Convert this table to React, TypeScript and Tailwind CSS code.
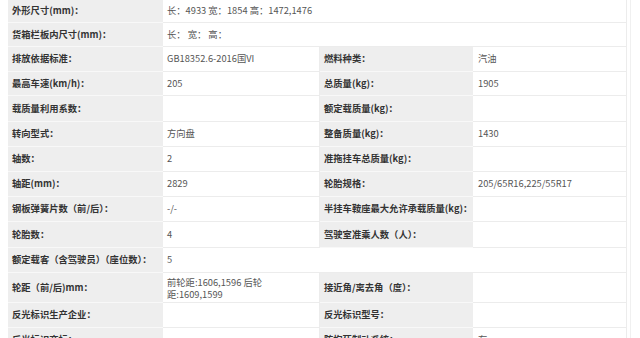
type Row = {
  h: string;
  l1: string;
  v1: React.ReactNode;
  l2?: string;
  v2?: string;
};

const rows: Row[] = [
  { h: 'h-[23px]', l1: '外形尺寸(mm)：', v1: '长：4933 宽：1854 高：1472,1476' },
  { h: 'h-[24px]', l1: '货箱栏板内尺寸(mm)：', v1: '长： 宽： 高：' },
  { h: 'h-[25px]', l1: '排放依据标准：', v1: 'GB18352.6-2016国VI', l2: '燃料种类：', v2: '汽油' },
  { h: 'h-[24px]', l1: '最高车速(km/h)：', v1: '205', l2: '总质量(kg)：', v2: '1905' },
  { h: 'h-[26px]', l1: '载质量利用系数：', v1: '', l2: '额定载质量(kg)：', v2: '' },
  { h: 'h-[25px]', l1: '转向型式：', v1: '方向盘', l2: '整备质量(kg)：', v2: '1430' },
  { h: 'h-[25px]', l1: '轴数：', v1: '2', l2: '准拖挂车总质量(kg)：', v2: '' },
  { h: 'h-[25px]', l1: '轴距(mm)：', v1: '2829', l2: '轮胎规格：', v2: '205/65R16,225/55R17' },
  { h: 'h-[25px]', l1: '钢板弹簧片数（前/后）：', v1: '-/-', l2: '半挂车鞍座最大允许承载质量(kg)：', v2: '' },
  { h: 'h-[26px]', l1: '轮胎数：', v1: '4', l2: '驾驶室准乘人数（人）：', v2: '' },
  { h: 'h-[25px]', l1: '额定载客（含驾驶员）（座位数）：', v1: '5' },
  {
    h: 'h-[30px]',
    l1: '轮距（前/后)mm：',
    v1: (
      <div className="leading-[12px]">
        前轮距:1606,1596 后轮
        <br />
        距:1609,1599
      </div>
    ),
    l2: '接近角/离去角（度）：',
    v2: '',
  },
  { h: 'h-[25px]', l1: '反光标识生产企业：', v1: '', l2: '反光标识型号：', v2: '' },
  { h: 'h-[25px]', l1: '反光标识商标：', v1: '', l2: '防抱死制动系统：', v2: '有' },
];

const label = 'flex items-center pl-[4px] bg-[#eeeeee] border-b border-[#f8f8f8] font-bold text-[#333]';
const value = 'flex items-center pl-[4px] bg-white border-b border-r border-[#ececec] text-[#555]';

export default function App() {
  return (
    <div
      className="w-[640px] h-[338px] overflow-hidden bg-white flex text-[9.3px] leading-none"
      style={{ fontFamily: '"Noto Sans CJK SC", "Noto Sans", sans-serif' }}
    >
      <div className="w-[8px] shrink-0" />
      <div className="w-[619px] shrink-0 flex flex-col">
        {rows.map((r, i) => (
          <div key={i} className={`grid grid-cols-[155px_157px_153px_154px] shrink-0 ${r.h}`}>
            <div className={label}>{r.l1}</div>
            {r.l2 === undefined ? (
              <div className={`${value} col-span-3`}>{r.v1}</div>
            ) : (
              <>
                <div className={value}>{r.v1}</div>
                <div className={`${label} pl-[3px]`}>{r.l2}</div>
                <div className={`${value} pl-[5px]`}>{r.v2}</div>
              </>
            )}
          </div>
        ))}
      </div>
      <div className="w-[3px] shrink-0" />
      <div className="w-px shrink-0 bg-[#f0f0f0]" />
    </div>
  );
}
